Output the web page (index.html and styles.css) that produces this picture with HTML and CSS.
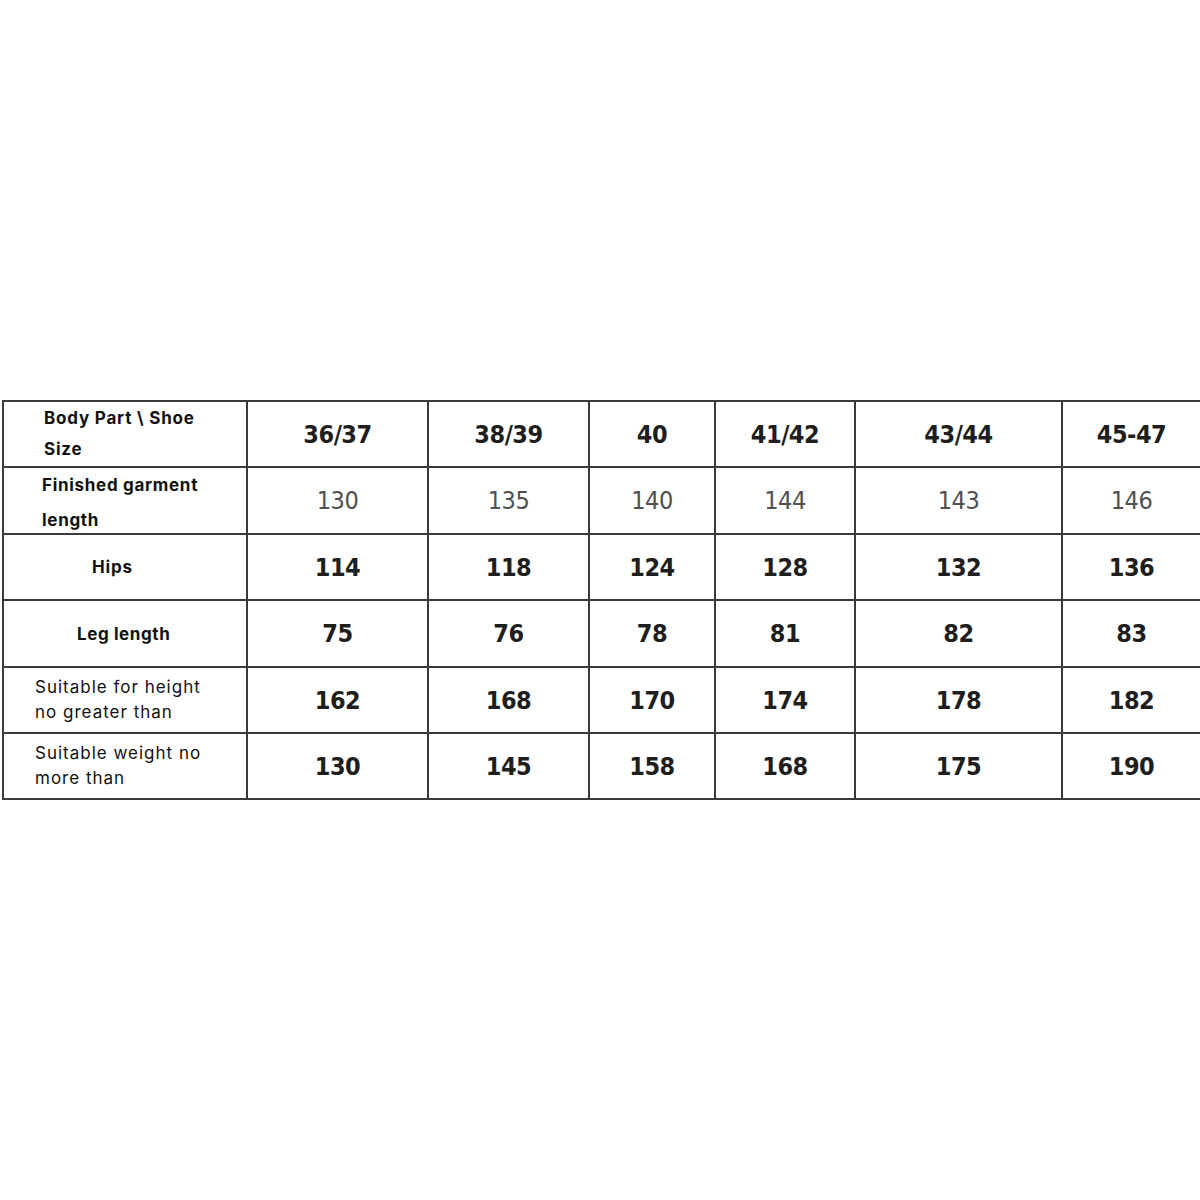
FILE: index.html
```html
<!DOCTYPE html>
<html>
<head>
<meta charset="utf-8">
<link rel="stylesheet" href="styles.css">
</head>
<body>
<div class="page">
<table class="chart">
  <colgroup>
    <col class="c0"><col class="c1"><col class="c2"><col class="c3"><col class="c4"><col class="c5"><col class="c6">
  </colgroup>
  <tr class="r0">
    <td class="lab lab-head"><div class="l1">Body Part <span class="slash">\</span> Shoe</div><div class="l2">Size</div></td>
    <td class="num b">36/37</td><td class="num b">38/39</td><td class="num b">40</td><td class="num b">41/42</td><td class="num b">43/44</td><td class="num b">45-47</td>
  </tr>
  <tr class="r1">
    <td class="lab lab-fin"><div class="l1">Finished garment</div><div class="l2">length</div></td>
    <td class="num g">130</td><td class="num g">135</td><td class="num g">140</td><td class="num g">144</td><td class="num g">143</td><td class="num g">146</td>
  </tr>
  <tr class="r2">
    <td class="lab lab-hips">Hips</td>
    <td class="num b">114</td><td class="num b">118</td><td class="num b">124</td><td class="num b">128</td><td class="num b">132</td><td class="num b">136</td>
  </tr>
  <tr class="r3">
    <td class="lab lab-leg">Leg length</td>
    <td class="num b">75</td><td class="num b">76</td><td class="num b">78</td><td class="num b">81</td><td class="num b">82</td><td class="num b">83</td>
  </tr>
  <tr class="r4">
    <td class="lab lab-reg">Suitable for height<br>no greater than</td>
    <td class="num b">162</td><td class="num b">168</td><td class="num b">170</td><td class="num b">174</td><td class="num b">178</td><td class="num b">182</td>
  </tr>
  <tr class="r5">
    <td class="lab lab-reg">Suitable weight no<br>more than</td>
    <td class="num b">130</td><td class="num b">145</td><td class="num b">158</td><td class="num b">168</td><td class="num b">175</td><td class="num b">190</td>
  </tr>
</table>
</div>
</body>
</html>
```
FILE: styles.css
```css
html, body {
  margin: 0;
  padding: 0;
  background: #ffffff;
}
.page {
  width: 1200px;
  height: 1200px;
  padding-top: 400px;
  padding-left: 2px;
  box-sizing: border-box;
}
.chart {
  border-collapse: collapse;
  table-layout: fixed;
  width: 1198px;
}
.chart td {
  border: 2px solid #3a3a3a;
  padding: 0;
}
.c0 { width: 244px; }
.c1 { width: 181px; }
.c2 { width: 161px; }
.c3 { width: 126px; }
.c4 { width: 140px; }
.c5 { width: 207px; }
.c6 { width: 139px; }
.chart .r0 td { height: 63px; }
.chart .r1 td { height: 65px; }
.chart .r2 td { height: 64px; }
.chart .r3 td { height: 65px; }
.chart .r4 td { height: 64px; }
.chart .r5 td { height: 64px; }

.chart .num {
  text-align: center;
  vertical-align: middle;
  font-family: "DejaVu Sans", sans-serif;
  font-stretch: condensed;
  font-size: 25px;
  letter-spacing: -0.5px;
  color: #1e1e1e;
  line-height: 1;
}
.chart .num.b { font-weight: bold; }
.chart .num.g { font-weight: normal; color: #505050; }

.chart .lab {
  font-family: "Inter", "Noto Sans", sans-serif;
  color: #111;
  vertical-align: top;
  font-size: 17px;
}
.chart .lab-head {
  font-weight: bold;
  padding-left: 40px;
  padding-top: 1px;
  letter-spacing: 0.8px;
}
.lab-head .l1, .lab-head .l2 { line-height: 31px; }
.chart .lab-fin {
  font-weight: bold;
  padding-left: 38px;
  letter-spacing: 0.7px;
}
.lab-fin .l1 { line-height: 35px; }
.lab-fin .l2 { line-height: 24px; margin-top: 5px; }
.chart .lab-hips {
  font-weight: bold;
  vertical-align: middle;
  padding-left: 88px;
  letter-spacing: 0.8px;
}
.chart .lab-leg {
  font-weight: bold;
  vertical-align: middle;
  padding-left: 73px;
  letter-spacing: 0.6px;
}
.chart .lab-reg {
  font-weight: normal;
  padding-left: 31px;
  vertical-align: middle;
  line-height: 25px;
  letter-spacing: 1px;
}
```
